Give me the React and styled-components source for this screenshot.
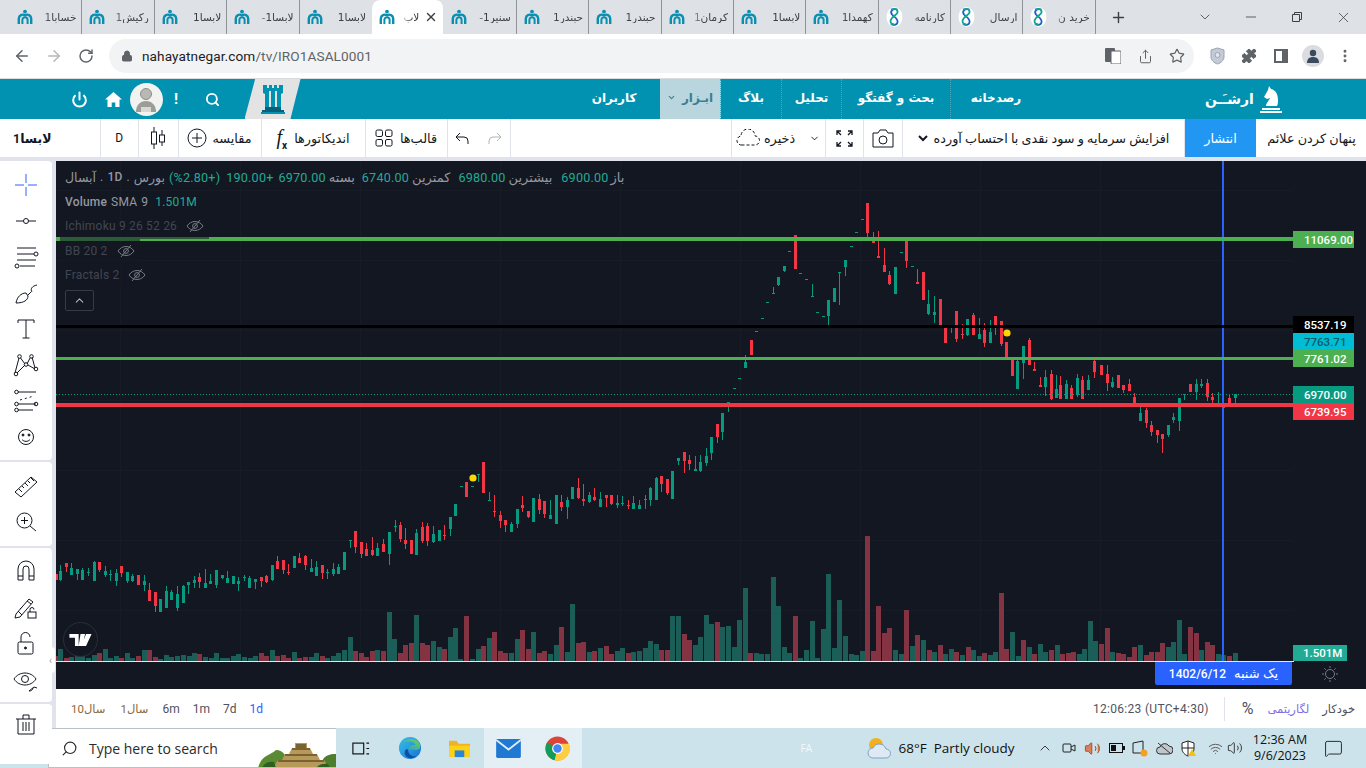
import React from 'react';
import styled, { createGlobalStyle } from 'styled-components';
import {
  ArrowLeft, ArrowRight, RotateCw, Lock, Plus, Minus, X, ChevronDown, ChevronUp, Star,
  Search, Power, Puzzle, MoreVertical, Share, Volume2, Wifi, MessageSquare,
} from 'lucide-react';

const UI = '"Roboto", "DejaVu Sans", sans-serif';
const GREEN = '#089981';
const RED = '#f23645';

const Global = createGlobalStyle`
  html, body { margin: 0; padding: 0; height: 100%; overflow: hidden; background: #e0e3eb; }
  #root { height: 100%; }
  * { box-sizing: border-box; }
`;

const Page = styled.div`
  width: 1366px;
  height: 768px;
  display: flex;
  flex-direction: column;
  overflow: hidden;
  font-family: ${UI};
  background: #e0e3eb;
`;

/* browser chrome */
const TabStrip = styled.div`
  height: 34px;
  flex: none;
  display: flex;
  align-items: stretch;
  padding-left: 10px;
  background: #dee1e6;
  color: #45494e;
`;

const Tab = styled.div`
  width: 72.4px;
  flex: none;
  display: flex;
  align-items: center;
  gap: 5px;
  padding: 0 5px 0 7px;
  background: ${(p) => (p.$active ? '#fff' : 'transparent')};
  border-radius: ${(p) => (p.$active ? '8px 8px 0 0' : '0')};
  border-right: 1px solid ${(p) => (p.$active || p.$beforeActive ? 'transparent' : '#8f9296')};
  background-clip: padding-box;
`;

const TabTitle = styled.span`
  flex: 1;
  min-width: 0;
  overflow: hidden;
  white-space: nowrap;
  direction: rtl;
  text-align: right;
  font: 10.5px "DejaVu Sans", sans-serif;
  color: #3c4043;
  -webkit-mask-image: linear-gradient(to right, transparent 0, #000 12px);
  mask-image: linear-gradient(to right, transparent 0, #000 12px);
`;

const StripButton = styled.div`
  width: ${(p) => p.$w}px;
  flex: none;
  display: flex;
  align-items: center;
  justify-content: center;
  color: #3c4043;
`;

const Grow = styled.div`
  flex: 1;
  min-width: 0;
`;

const AddressRow = styled.div`
  height: 45px;
  flex: none;
  display: flex;
  align-items: center;
  background: #fff;
  color: #5f6368;
  border-bottom: 1px solid #dadce0;
`;

const NavButton = styled.div`
  width: 32px;
  flex: none;
  display: flex;
  justify-content: center;
  color: ${(p) => (p.$off ? '#b6b8bb' : '#5f6368')};
  &:first-child { margin-left: 6px; }
`;

const Omnibox = styled.div`
  width: 1085px;
  height: 34px;
  margin-left: 7px;
  display: flex;
  align-items: center;
  padding: 0 1px 0 12px;
  border-radius: 17px;
  background: #f1f3f4;
`;

const Url = styled.span`
  margin-left: 9px;
  flex: 1;
  font: 13.6px "Roboto", sans-serif;
  letter-spacing: 0.1px;
  color: #5f6368;
  b { font-weight: 400; color: #202124; }
`;

const OmniIcon = styled.div`
  width: 32px;
  flex: none;
  display: flex;
  justify-content: center;
  color: #5f6368;
`;

const ToolbarIcon = styled.div`
  width: 32px;
  flex: none;
  display: flex;
  justify-content: center;
  color: #5f6368;
  margin-left: ${(p) => p.$ml ?? 0}px;
`;

const Avatar = styled.div`
  width: 22px;
  height: 22px;
  border-radius: 50%;
  background: #dadce0;
  display: flex;
  align-items: center;
  justify-content: center;
`;

/* site header */
const Header = styled.div`
  height: 40px;
  flex: none;
  display: flex;
  align-items: center;
  padding-left: 59px;
  background: #0092b0;
  color: #fff;
`;

const HeaderIcon = styled.div`
  width: ${(p) => p.$w}px;
  flex: none;
  display: flex;
  justify-content: center;
  align-items: center;
  font: 700 15px "Roboto", sans-serif;
`;

const UserFace = styled.div`
  width: 33px;
  height: 33px;
  margin-left: 2.5px;
  flex: none;
  border-radius: 50%;
  background: #f2f2f0;
  display: flex;
  align-items: center;
  justify-content: center;
`;

const LogoSlant = styled.div`
  width: 56px;
  height: 40px;
  flex: none;
  margin: 0 279.500px 0 10px;
  background: #e3e3e3;
  clip-path: polygon(19% 0, 100% 0, 82% 100%, 0 100%);
  display: flex;
  align-items: center;
  justify-content: center;
`;

const NavItem = styled.div`
  width: ${(p) => p.$w}px;
  height: 40px;
  flex: none;
  display: flex;
  align-items: center;
  justify-content: center;
  gap: 6px;
  padding-bottom: 3px;
  padding-right: ${(p) => p.$pr ?? 0}px;
  font: 700 12px "DejaVu Sans", sans-serif;
  background: ${(p) => (p.$active ? '#b9d6df' : 'transparent')};
  color: ${(p) => (p.$active ? '#3a7f94' : '#fff')};
  border-right: ${(p) => (p.$dots ? '1px dotted #4aa9bf' : '0')};
`;

const Brand = styled.div`
  display: flex;
  align-items: center;
  gap: 6px;
  margin-left: 164px;
  font: 700 14px "DejaVu Sans", sans-serif;
`;

/* chart toolbar */
const TopBar = styled.div`
  height: 38px;
  flex: none;
  display: flex;
  background: #fff;
  color: #131722;
`;

const Cell = styled.div`
  width: ${(p) => p.$w}px;
  flex: none;
  display: flex;
  align-items: center;
  justify-content: ${(p) => (p.$start ? 'flex-start' : 'center')};
  padding-left: ${(p) => (p.$start ? 13 : 0)}px;
  gap: ${(p) => p.$gap ?? 6}px;
  font: ${(p) => (p.$bold ? 700 : 400)} ${(p) => p.$size ?? 12.8}px ${UI};
  border-right: ${(p) => (p.$plain ? '0' : '1px solid #e0e3eb')};
  background: ${(p) => p.$bg ?? 'transparent'};
  color: ${(p) => p.$fg ?? '#131722'};
  white-space: nowrap;
`;

const SaveChevron = styled.span`
  display: flex;
  margin-left: 10px;
`;

const Fx = styled.span`
  font: italic 20px "Liberation Serif", serif;
  sub { font: 700 10px "Roboto", sans-serif; }
`;

const Body = styled.div`
  flex: 1;
  min-height: 0;
  display: flex;
  gap: 4px;
  padding-top: 4px;
`;

const SideRail = styled.div`
  width: 52px;
  flex: none;
  display: flex;
  flex-direction: column;
  gap: 2px;
  position: relative;
`;

const RailGroup = styled.div`
  flex: none;
  height: ${(p) => p.$h}px;
  padding-top: ${(p) => p.$pad}px;
  background: #fff;
  border-radius: 0 4px 4px 0;
  overflow: hidden;
`;

const RailButton = styled.div`
  height: ${(p) => p.$h ?? 36}px;
  display: flex;
  align-items: center;
  justify-content: center;
  color: #131722;
`;

const Handle = styled.div`
  position: absolute;
  left: 46px;
  top: 486px;
  width: 9px;
  height: 26px;
  border-radius: 4px;
  background: #fff;
  color: #9598a1;
  font: 10px "Roboto", sans-serif;
  display: flex;
  align-items: center;
  justify-content: center;
`;

const Main = styled.div`
  flex: 1;
  min-width: 0;
  display: flex;
  flex-direction: column;
`;

const ChartPanel = styled.div`
  height: 528px;
  flex: none;
  position: relative;
  overflow: hidden;
  background: #131722;
`;

const ChartSvg = styled.svg`
  display: block;
`;

const Legend = styled.div`
  position: absolute;
  left: 4px;
  top: 4px;
  display: flex;
  flex-direction: column;
  align-items: flex-start;
  color: #b2b5be;
  font: 12.5px ${UI};
`;

const LegendRow = styled.div`
  height: 24.5px;
  padding: 0 5px;
  display: flex;
  align-items: center;
  gap: ${(p) => p.$gap ?? 0}px;
  white-space: nowrap;
  color: ${(p) => (p.$dim ? '#434651' : '#9598a1')};
  background: ${(p) => (p.$dim ? 'rgba(19,23,34,0.55)' : 'transparent')};
`;

const Label = styled.span`
  font-size: ${(p) => p.$size ?? 12}px;
  font-weight: ${(p) => (p.$bold ? 500 : 400)};
  color: ${(p) => p.$c ?? 'inherit'};
  margin-left: ${(p) => p.$ml ?? 0}px;
  letter-spacing: 0.2px;
`;

const Collapse = styled.div`
  width: 29px;
  height: 21px;
  margin: 2px 0 0 5px;
  display: flex;
  align-items: center;
  justify-content: center;
  border: 1px solid #363a45;
  border-radius: 2px;
  color: #b2b5be;
`;

const PriceTag = styled.div`
  position: absolute;
  left: 1237px;
  top: ${(p) => p.$y}px;
  width: 61px;
  height: 17px;
  padding-left: 11px;
  display: flex;
  align-items: center;
  font: 500 11.5px "Roboto", sans-serif;
  background: ${(p) => p.$bg};
  color: ${(p) => p.$fg ?? '#fff'};
`;

const VolumeTag = styled(PriceTag)`
  height: 16px;
  width: 54px;
  padding-left: 10px;
  background: #22ab94;
`;

const DateTag = styled.div`
  position: absolute;
  left: 1099px;
  top: 501px;
  width: 137px;
  height: 23px;
  display: flex;
  align-items: center;
  justify-content: center;
  gap: 8px;
  border-radius: 0 0 2px 2px;
  background: #2962ff;
  color: #fff;
  font: 500 12px ${UI};
`;

const WatermarkBadge = styled.div`
  position: absolute;
  left: 7px;
  top: 461px;
  width: 35px;
  height: 35px;
  border-radius: 50%;
  border: 1px solid #2a2e39;
  background: #131722;
  display: flex;
  align-items: center;
  justify-content: center;
`;

const SunIcon = styled.div`
  position: absolute;
  left: 1266px;
  top: 505px;
  color: #787b86;
`;

const RangeBar = styled.div`
  height: 39px;
  flex: none;
  display: flex;
  align-items: center;
  padding: 0 11px 0 15px;
  background: #fff;
  font: 12px ${UI};
`;

const Range = styled.span`
  margin-right: ${(p) => p.$gap}px;
  font-size: ${(p) => p.$size ?? 12}px;
  letter-spacing: ${(p) => p.$track ?? 0}px;
  color: ${(p) => p.$c ?? '#50535e'};
  white-space: nowrap;
`;

const Divider = styled.i`
  width: 1px;
  height: 24px;
  margin: 0 17px 0 15px;
  background: #e0e3eb;
`;

/* windows taskbar */
const Taskbar = styled.div`
  height: 40px;
  flex: none;
  display: flex;
  align-items: center;
  background: #cde3ec;
  color: #111;
`;

const StartButton = styled.div`
  width: 48px;
  height: 40px;
  flex: none;
  display: flex;
  align-items: center;
  justify-content: center;
`;

const SearchBox = styled.div`
  width: 288px;
  height: 40px;
  flex: none;
  display: flex;
  align-items: center;
  padding-left: 12px;
  gap: 11px;
  background: #fff;
  border: 1px solid #b9c1c6;
  border-right: 0;
  font: 14px "Open Sans", sans-serif;
  color: #2b2b2b;
  overflow: hidden;
`;

const SearchGlyph = styled.span`
  display: flex;
  transform: scaleX(-1);
`;

const TaskApp = styled.div`
  width: 49.3px;
  height: 40px;
  flex: none;
  display: flex;
  align-items: center;
  justify-content: center;
  background: ${(p) => (p.$on ? '#e3eff4' : 'transparent')};
`;

const Lang = styled.span`
  margin-left: 218px;
  width: 66px;
  font: 10px "Open Sans", sans-serif;
  color: #f2f7f9;
`;

const Weather = styled.div`
  display: flex;
  align-items: center;
  gap: 6px;
  white-space: nowrap;
  font: 13.5px "Open Sans", sans-serif;
`;

const Tray = styled.div`
  width: ${(p) => p.$w ?? 23.8}px;
  margin-left: ${(p) => p.$ml ?? 0}px;
  flex: none;
  display: flex;
  align-items: center;
  justify-content: center;
  color: #222;
`;

const Clock = styled.div`
  width: 66px;
  margin-left: 2px;
  flex: none;
  text-align: center;
  font: 12.5px/16px "Open Sans", sans-serif;
`;

/* chart data, given as (x, up, bodyTop, bodyBottom, wickTop, wickBottom) in 3x crop coordinates */
const candlesFrom = (rows, ox, oy) => rows.map(([x, up, bt, bb, wt = bt, wb = bb]) => ({
  x: ox + x / 3, up, bt: oy + bt / 3, bb: oy + bb / 3, wt: oy + wt / 3, wb: oy + wb / 3,
}));

const CANDLES = [
  ...candlesFrom([
    [168,0,132,150],[181,1,123,150,105,153],[199,0,99,111,99,126],[214,1,114,135,99,135],[232,1,117,132,117,150],
    [247,1,120,150,114,150],[265,1,126,129,114,138],[283,1,96,153,93,153],[298,0,96,120,96,126],[316,1,123,135,108,141],
    [331,1,132,135,120,153],[349,1,129,153,117,168],[364,0,108,129,108,141],[382,1,126,153,126,159],[397,1,138,153,132,156],
    [415,0,135,165],[433,1,153,165,135,183],[448,0,180,213,159,213],[466,0,186,228,186,246],[481,1,207,246],
    [499,1,183,234,168,234],[514,1,186,210,180,210],[532,1,192,234,168,243],[550,1,168,219,165,219],[565,1,156,165,156,192],
    [583,1,150,159,138,174],[598,0,141,156,129,174],[616,1,159,174,117,174],[631,1,153,162,132,162],[649,1,120,165,120,174],
    [667,1,135,144,135,147],[682,1,144,159,123,159],[700,1,138,162],[715,1,153,162,141,183],[733,1,141,144,135,153],
    [748,1,144,174,138,174],[766,1,147,156,147,177],[784,0,141,153,141,171],[799,0,138,156,135,159],[817,1,105,150,105,153],
    [832,0,93,117,78,117],[850,0,90,120,90,132],[865,0,126,129,102,135],[883,1,78,114],[898,0,84,99,69,99],
    [916,0,78,105,75,120],[934,1,114,126,87,126],[949,1,111,138,93,138],[967,0,105,129,105,147],[982,1,126,129,117,147],
    [1000,1,117,132,99,138],[1015,1,111,132,102,132],[1033,1,66,120],[1051,1,30,33,30,54],[1066,0,3,51,3,69],
    [1084,0,36,72,36,84],[1099,0,57,78,39,78],[1117,0,60,75,21,78],[1132,1,54,78,39,78],[1150,0,42,66,27,66],
    [1168,1,6,72,6,105],[1186,1,-12,-9,-30,6],[1201,0,-15,27,-24,36],[1216,0,30,42,-6,57],[1234,0,30,72],
    [1249,1,9,75,-3,75],[1267,0,-9,33,-24,39],[1282,0,-12,33,-21,48],[1300,1,12,36,-12,39],[1318,1,0,33],
  ], 0, 530),
  ...candlesFrom([
    [13,0,405,408,375,420],[31,1,351,387,351,408],[46,1,312,348],[64,1,259,261],[79,0,246,291],[97,1,259,261],
    [115,1,223,226,223,246],[130,0,186,279],[148,1,300,303,276,303],[163,0,333,336,285,351],[181,0,345,363,333,384],
    [196,0,360,375,360,396],[214,1,372,396,366,396],[232,1,327,372,327,384],[247,0,315,324,288,336],[265,0,333,351,333,354],
    [280,1,294,366],[298,0,297,330,282,342],[313,0,303,342,303,354],[331,1,345,357,300,357],[349,1,285,372],
    [364,0,306,321,285,333],[382,1,300,321,291,357],[397,1,261,297],[415,0,264,294,234,297],[430,0,297,303,252,318],
    [448,1,285,306,276,309],[463,0,291,300,264,303],[481,1,297,321,276,321],[499,0,285,294,285,321],[514,0,285,312,285,315],
    [532,1,309,315,285,324],[547,1,309,312,288,318],[565,0,315,318,300,327],[580,1,309,327,288,327],[598,1,315,327,300,327],
    [616,1,297,300,285,327],[631,1,264,300,261,318],[649,1,234,300,231,300],[664,0,228,252,228,276],[682,0,237,279,237,285],
    [697,1,213,297],[715,1,174,183,174,195],[733,0,156,183,156,219],[748,0,180,192,165,210],[766,1,207,213,168,213],
    [781,1,186,213,165,216],[799,1,168,189,144,198],[814,1,111,159,111,180],[832,0,72,111,72,129],[847,1,39,96,39,120],
    [865,1,6,9,6,36],
  ], 440, 400),
  ...candlesFrom([
    [0,1,-36,-33],[16,1,-66,-63],[33,1,-114,-96,-135,-96],[50,0,-180,-135],[66,1,-207,-204],[84,1,-246,-243],
    [100,1,-294,-291],[116,1,-321,-318,-339,-318],[132,1,-369,-345,-369,-342],
  ], 734, 400),
  ...candlesFrom([
    [13,1,213,228,213,231],[28,1,168,171],[46,0,120,222],[61,1,235,237],[79,1,252,255],[97,1,303,306,267,306],
    [112,1,351,354],[130,1,363,366],[145,1,315,363,315,396],[163,1,279,321],[178,1,232,235,232,330],[196,1,195,216,195,243],
    [214,1,153,156],[229,1,111,114],[247,1,72,75],[262,0,24,114,24,126],[280,0,132,144,111,144],[295,0,183,189,108,189],
    [313,0,210,231,159,231],[328,0,240,267,228,270],[346,1,216,297],[364,1,171,174],[379,0,129,198,129,219],[397,1,213,216],
    [412,0,261,267,222,267],[430,0,231,315],[445,1,327,357,285,360],[463,1,351,360,303,384],[481,0,312,399],[496,0,396,444],
    [514,1,390,393,390,414],[529,0,348,432,348,441],[547,0,417,420,387,432],[562,1,372,420,372,423],[580,0,360,420,354,420],
    [598,1,417,432,369,432],[613,0,405,444,384,456],[631,1,411,444,375,444],[646,0,363,390,363,420],[664,0,378,447,378,453],
    [679,0,441,492],[697,0,489,543],[712,1,498,582,489,582],[730,1,453,504,453,552],[748,0,435,510,429,510],[763,0,522,528,501,528],
    [781,0,570,576,546,576],[796,1,546,576,525,603],[814,0,537,612,525,615],[829,1,582,609,540,609],
  ], 780, 195),
  ...candlesFrom([
    [-120,0,255,297,228,297],[-103,1,252,297,240,297],[-87,0,264,297,255,297],[-70,1,234,285,222,291],[-53,0,240,297,228,297],
    [-36,1,240,270,225,270],[-18,0,183,216,180,234],
  ], 1100, 300),
  ...candlesFrom([
    [3,0,195,225],[22,0,222,249,195,273],[37,1,246,261,231,264],[55,0,225,264],[70,0,255,270,255,279],[88,0,252,273,237,273],
    [103,0,291,318,279,318],[121,1,339,363,318,363],[139,0,330,369,324,384],[154,0,375,396,363,408],[172,0,390,405,390,429],
    [187,0,402,417,402,459],[205,1,375,405,375,411],[220,1,351,360,339,369],[238,1,294,363,294,393],[253,1,282,285,282,300],
    [271,0,252,276],[289,1,252,276,237,300],[304,1,252,258,237,264],[322,0,249,291,237,303],[337,0,291,300,279,315],
    [355,1,312,315,276,318],[370,1,318,324,318,328],[388,0,294,312,285,318],[406,1,282,294,282,315],
  ], 1100, 300),
];

const barsFrom = (rows, ox, oy) => rows.map(([x, up, top]) => ({ x: ox + x / 3, up, top: oy + top / 3 }));

const VOLUMES = [
  ...barsFrom([
    [168,0,378],[181,1,357],[198,0,384],[214,1,381],[231,1,375],[247,1,375],[264,1,384],[281,1,375],[298,0,369],[315,1,357],
    [331,1,384],[348,1,378],[364,0,384],[381,1,369],[397,1,384],[414,0,378],[432,1,360],[448,0,360],[465,0,381],[481,1,387],
    [497,1,375],[514,1,381],[531,1,378],[549,1,375],[566,1,378],[582,1,369],[598,0,372],[615,1,381],[632,1,384],[649,1,369],
    [665,1,384],[682,1,384],[699,1,378],[715,1,372],[732,1,381],[749,1,384],[765,1,378],[783,0,369],[799,0,378],[816,1,360],
    [832,0,378],[849,0,375],[865,0,384],[882,1,366],[898,0,384],[915,0,381],[932,1,381],[949,1,369],[965,0,378],[982,1,384],
    [999,1,378],[1015,1,369],[1033,1,360],[1050,1,321],[1066,0,363],[1082,0,369],[1099,0,381],[1116,0,363],[1132,1,360],[1149,0,363],
    [1166,1,246],[1183,1,327],[1199,0,369],[1216,0,345],[1232,0,339],[1249,1,255],[1266,0,339],[1282,0,345],[1299,1,333],[1316,1,351],
    [1332,0,357],[1349,1,321],[1366,1,294],
  ], 0, 530),
  ...barsFrom([
    [0,1,387],[19,0,258],[37,1,387],[54,1,357],[70,0,348],[87,1,324],[103,0,306],[120,0,363],[136,0,369],[154,1,369],[171,1,327],
    [187,0,300],[204,0,357],[220,1,306],[237,0,369],[253,0,363],[271,1,372],[288,1,345],[304,0,291],[321,1,366],[337,1,222],
    [354,0,339],[370,0,336],[387,1,366],[403,0,363],[421,1,354],[438,0,348],[454,0,372],[471,1,363],[487,1,354],[504,0,369],
    [520,1,366],[538,1,363],[555,1,354],[571,1,333],[588,1,342],[604,0,360],[621,0,360],[637,1,258],[655,1,258],[672,0,312],
    [688,0,330],[705,1,345],[721,1,321],[738,1,255],[754,1,282],[771,0,276],[787,1,291],[805,1,288],[821,1,351],[838,1,270],
    [855,1,174],[871,0,369],[888,1,369],[904,1,372],[922,1,372],[939,1,141],[955,1,228],[972,1,351],[988,1,369],[1005,0,258],
    [1021,1,384],[1039,1,360],[1056,1,273],[1072,1,384],[1089,1,297],[1105,1,132],[1122,1,354],[1138,1,210],[1156,1,318],[1173,1,372],
    [1189,1,375],[1206,1,363],[1222,0,18],[1239,0,363],[1255,0,228],[1272,0,309],[1288,0,294],[1306,1,360],[1323,1,372],[1339,0,240],
    [1356,1,348],[1372,0,315],
    [1389,1,330],[1406,0,360],[1423,1,366],[1439,0,345],[1456,1,372],[1473,1,357],[1489,0,366],[1506,1,375],[1523,0,351],[1539,1,360],
    [1556,1,378],[1573,0,369],[1589,1,375],[1606,1,366],[1623,0,189],[1639,0,357],[1656,1,306],[1673,1,378],[1689,0,330],[1706,1,351],
    [1723,0,372],[1739,1,342],[1756,1,366],
  ], 460, 530),
  ...barsFrom([
    [3,0,90],[20,1,75],[37,0,102],[54,0,99],[70,0,96],[87,1,102],[103,1,87],[120,1,3],[136,1,63],[153,0,72],[170,0,24],[187,1,96],
    [204,0,99],[220,0,102],[237,0,111],[253,0,81],[270,1,75],[287,0,105],[303,0,96],[320,0,96],[337,0,69],[353,1,81],[370,1,66],
    [387,1,0],[403,1,102],[420,0,21],[437,0,39],[453,1,90],[470,0,66],[487,0,75],[503,1,102],[520,1,105],[537,0,108],[555,1,99],
  ], 1050, 620),
];

const LEVELS = [
  { y: 237, h: 4, c: '#4caf50' },
  { y: 325, h: 3, c: '#000' },
  { y: 357, h: 3, c: '#4caf50' },
  { y: 403, h: 4, c: RED },
];

const TAGS = [
  { y: 70, t: '11069.00', bg: '#4caf50' },
  { y: 155, t: '8537.19', bg: '#000' },
  { y: 172, t: '7763.71', bg: '#00bcd4', fg: '#0c5a66' },
  { y: 189, t: '7761.02', bg: '#4caf50' },
  { y: 225, t: '6970.00', bg: GREEN },
  { y: 242, t: '6739.95', bg: RED },
];

const TABS = [
  ['خسابا1', 'n'], ['رکیش1', 'n'], ['لابسا1', 'n'], ['لابسا1-', 'n'], ['لابسا1', 'n'], ['لاب', 'n', true],
  ['سنیر1-', 'n'], ['حبندر1', 'n'], ['حبندر1', 'n'], ['کرمان1', 'n'], ['لابسا1', 'n'], ['کهمدا1', 'n'],
  ['کارنامه', 'b'], ['ارسال', 'b'], ['خرید ن', 'b'],
];

// legend values after the symbol, each with the space before it
const OHLC = [
  ['(%2.80+)', 1, 4], ['190.00+', 1, 6], ['6970.00', 1, 5], ['بسته', 0, 3], ['6740.00', 1, 7], ['کمترین', 0, 3],
  ['6980.00', 1, 8], ['بیشترین', 0, 3], ['6900.00', 1, 9], ['باز', 0, 2],
];

/* favicons and logos */
const NahayatIcon = () => (
  <svg width="16" height="16" viewBox="0 0 16 16" fill="none" stroke="#0a8fb1" strokeWidth="2.4">
    <circle cx="8" cy="2.6" r="1.9" fill="#0a8fb1" stroke="none" />
    <path d="M1.800 15V9.500a4 4 0 0 1 6.200-3.200 4 4 0 0 1 6.200 3.200V15" />
    <path d="M5.400 15v-4.200a2.600 2.600 0 0 1 5.200 0V15" strokeWidth="2" />
  </svg>
);

const RibbonIcon = () => (
  <svg width="17" height="20" viewBox="0 0 17 20" fill="none" strokeWidth="1.800">
    <ellipse cx="8.500" cy="10" rx="8" ry="10" fill="#fff" stroke="none" />
    <path d="M11.500 2.500C7 1 3.500 4 6 7.500c2 2.500 6.500 4 5.500 8-.6 2.500-4 3.200-6.500 1.500" stroke="#1d62c4" />
    <path d="M5 2.500c3-1.300 7-.5 6.500 3-.4 2.500-6.500 4-7 8.500-.2 2 1.800 3.500 4 3.500" stroke="#16a394" />
  </svg>
);

const Rook = () => (
  <svg width="26" height="32" viewBox="0 0 26 32">
    <path d="M3 2h4v3h2V2h3v3h2V2h3v3h2V2h4v8l-2 1v13H5V11L3 10z" fill="#0092b0" />
    <path d="M9 8h2v16H9zM15 8h2v16h-2z" fill="#e3e3e3" />
    <path d="M5 24h16v3H5zM2 27h22v4H2z" fill="#06607a" />
    <path d="M1 29h24v2H1z" fill="#0092b0" />
  </svg>
);

const Knight = () => (
  <svg width="22" height="28" viewBox="0 0 22 28" fill="#fff">
    <path d="M9 1l2 3c5 1 7 6 7 11 0 2 0 4-1 6H6c0-3 3-5 4-8l-3 1-3-2 4-7z" />
    <path d="M2 23h18v2H2zM0 26h22v2H0z" />
  </svg>
);

const Face = () => (
  <svg width="26" height="28" viewBox="0 0 26 28">
    <circle cx="13" cy="9" r="5.500" fill="#b9b9b4" stroke="#8e8e88" />
    <path d="M3 27c0-7 4-11 10-11s10 4 10 11z" fill="#9d9d97" />
    <path d="M8 22h10v5H8z" fill="#d8d8d4" />
  </svg>
);

/* 28px chart tool icons */
const Tool = ({ children, color = 'currentColor' }) => (
  <svg width="28" height="28" viewBox="0 0 28 28" fill="none" stroke={color}>{children}</svg>
);

const RAIL_GROUPS = [
  {
    h: 299, pad: 6, rowH: 36,
    icons: [
      <Tool color="#2962ff"><path d="M14 3v9M14 16v9M3 14h9M16 14h9" /></Tool>,
      <Tool><path d="M4 14h7.500M16.500 14H24" /><circle cx="14" cy="14" r="2.500" /></Tool>,
      <Tool><path d="M5 5h19M5 11h17M5 17h19M8 23h15" /><circle cx="24" cy="11" r="2" /><circle cx="5" cy="23" r="2" /></Tool>,
      <Tool><path d="M4 24c1-6 5-10 10-10l2 3c0 4-4 7-12 7zM16 16l3-3M20 13c-2-3 0-6 5-7" /></Tool>,
      <Tool><path d="M6 8V5h16v3M14 5v18M10.500 23h7" /></Tool>,
      <Tool><path d="M7 7l-4 15M8.500 7L13 13M15 13l3-6M20 6l3 11M5 22l8-8M16 14l7 4" /><circle cx="7.500" cy="5.500" r="1.800" /><circle cx="14" cy="13.500" r="1.800" /><circle cx="19.500" cy="5.500" r="1.800" /><circle cx="4" cy="23" r="1.800" /><circle cx="24" cy="18" r="1.800" /></Tool>,
      <Tool><path d="M6 5h18M6 17h18M6 23h15" /><path d="M8 13l14-4" strokeDasharray="2 3" /><circle cx="4.500" cy="5" r="1.800" /><circle cx="4.500" cy="17" r="1.800" /><circle cx="24" cy="17" r="1.800" /><circle cx="4.500" cy="23" r="1.800" /></Tool>,
      <Tool><circle cx="14" cy="14" r="7.500" /><circle cx="11" cy="12" r="1" fill="currentColor" /><circle cx="17" cy="12" r="1" fill="currentColor" /><path d="M10 16.500c2 2.500 6 2.500 8 0" /></Tool>,
    ],
  },
  {
    h: 84, pad: 7, rowH: 35,
    icons: [
      <Tool><path d="M3 19L19 4l6 5L9 24zM7 16l3 3M10 13l2 2M13 10l3 3M16 8l2 2M19 5l3 3" /></Tool>,
      <Tool><circle cx="12.500" cy="12.500" r="7.500" /><path d="M18 18l6 5M12.500 9v7M9 12.500h7" /></Tool>,
    ],
  },
  {
    h: 154, pad: 5, rowH: 36.5,
    icons: [
      <Tool><path d="M6 23V12a8 8 0 0 1 16 0v11h-5V12a3 3 0 0 0-6 0v11zM6 19h5M17 19h5" /></Tool>,
      <Tool><path d="M4 20L17 5l4 3L8 23l-5 1zM6 17l4 4M15 7l4 3M11 12l-3 3" /><rect x="16" y="18" width="8" height="6" /><path d="M18 18v-2.500a2 2 0 0 1 4 0" /></Tool>,
      <Tool><rect x="6" y="12" width="15" height="12" rx="1.500" /><path d="M9 12V7a4.500 4.500 0 0 1 9 0" /><circle cx="13.500" cy="18" r="1" fill="currentColor" /></Tool>,
      <Tool><path d="M2 12c5-8 17-8 22 0-5 8-17 8-22 0z" /><circle cx="13" cy="12" r="3.500" /><path d="M17 24l5-4 3 1M17 24c2 0 4-1 4-3" /></Tool>,
    ],
  },
  {
    h: 60, pad: 2, rowH: 36,
    icons: [
      <Tool><path d="M4 9h20M11 9V5h6v4M6 9v15h16V9M11 12v9M14 12v9M17 12v9" /></Tool>,
    ],
  },
];

const ChartCanvas = () => (
  <ChartSvg width="1310" height="528" viewBox="56 161 1310 528" shapeRendering="crispEdges">
    {[120, 240, 360, 500, 620, 740, 860, 980, 1100].map((x) => (
      <line key={x} x1={x} x2={x} y1="161" y2="661" stroke="#171b26" />
    ))}
    {[190, 260, 330, 400, 470, 540, 610].map((y) => (
      <line key={y} x1="56" x2="1293" y1={y} y2={y} stroke="#171b26" />
    ))}
    {VOLUMES.map((b, i) => (
      <rect key={i} x={Math.round(b.x - 2)} y={b.top} width="4.600" height={661 - b.top} fill={b.up ? '#1b5e58' : '#843342'} />
    ))}
    <rect x="1222" y="161" width="2" height="500" fill="#2962ff" />
    {CANDLES.map((c, i) => {
      const cx = Math.round(c.x);
      return (
        <g key={i} fill={c.up ? GREEN : RED}>
          <rect x={cx} y={Math.round(c.wt)} width="1" height={Math.max(1, Math.round(c.wb - c.wt))} />
          <rect x={cx - 1} y={Math.round(c.bt)} width="3" height={Math.max(1, Math.round(c.bb - c.bt))} />
        </g>
      );
    })}
    <line x1="56" x2="1293" y1="394.500" y2="394.500" stroke={GREEN} strokeDasharray="1 2" />
    {LEVELS.map((l) => <rect key={l.y} x="56" y={l.y} width="1238" height={l.h} fill={l.c} />)}
    <rect x="56" y="661" width="1238" height="1" fill="#e6e7ea" />
    <g shapeRendering="auto" fill="#ffd600">
      <circle cx="473" cy="478" r="3.600" />
      <circle cx="1007" cy="333" r="3.600" />
    </g>
  </ChartSvg>
);

const EyeOff = () => (
  <svg width="18" height="14" viewBox="0 0 18 14" fill="none" stroke="#787b86">
    <path d="M1 7c4-6 12-6 16 0-4 6-12 6-16 0z" />
    <circle cx="9" cy="7" r="2.400" />
    <path d="M14 1L4 13" />
  </svg>
);

const EdgeIcon = () => (
  <svg width="24" height="24" viewBox="0 0 26 26">
    <defs>
      <linearGradient id="edgeA" x1="0" y1="0" x2="1" y2="1"><stop offset="0" stopColor="#35c1f1" /><stop offset="1" stopColor="#1b6fd0" /></linearGradient>
      <linearGradient id="edgeB" x1="0" y1="1" x2="1" y2="0"><stop offset="0" stopColor="#1e9ae0" /><stop offset="1" stopColor="#70d44b" /></linearGradient>
    </defs>
    <circle cx="13" cy="13" r="12" fill="url(#edgeA)" />
    <path d="M2 14C3 7 8 3 14 3c6 0 10 4 10 8 0 3-2 4-5 4H11c0-4 5-6 8-5-1-3-4-4-7-4C7 6 3 9 2 14z" fill="url(#edgeB)" />
    <path d="M11 15c0 5 4 8 9 7-3 2-7 3-10 1-3-2-4-6-1-9z" fill="#0c4fa8" />
  </svg>
);

const FolderIcon = () => (
  <svg width="23" height="21" viewBox="0 0 24 22">
    <path d="M1 3h8l2 3h12v14H1z" fill="#f0b323" />
    <path d="M1 8h22v12H1z" fill="#fcd116" />
    <path d="M7 13h10v7H7z" fill="#2a86d6" />
  </svg>
);

const MailIcon = () => (
  <svg width="25" height="19" viewBox="0 0 26 20">
    <rect width="26" height="20" rx="1.500" fill="#1f78d1" />
    <path d="M0 1l13 10L26 1" fill="none" stroke="#dcecf9" strokeWidth="2" />
  </svg>
);

const ChromeIcon = () => (
  <svg width="25" height="25" viewBox="0 0 26 26">
    <circle cx="13" cy="13" r="12.500" fill="#db4437" />
    <path d="M13 13L2.200 6.800A12.500 12.500 0 0 0 10 25.200z" fill="#0f9d58" />
    <path d="M13 13l-3 12.200A12.500 12.500 0 0 0 24.800 8H13z" fill="#ffcd40" />
    <circle cx="13" cy="13" r="5.600" fill="#fff" />
    <circle cx="13" cy="13" r="4.400" fill="#4285f4" />
  </svg>
);

const TempleThumb = () => (
  <svg width="78" height="40" viewBox="0 0 78 40" style={{ flex: 'none', marginLeft: 'auto' }}>
    <path d="M0 40c4-14 12-12 18-18 8 0 12 8 14 18z" fill="#5a8a33" />
    <path d="M62 40c2-12 8-14 16-14v14z" fill="#4e7d2c" />
    <path d="M15 40l5-8h4l3-6h4l3-6h3v-5h12v5h3l3 6h4l3 6h4l5 8z" fill="#b79a5a" />
    <path d="M34 20h18v2H34zM27 26h32v2H27zM20 32h46v2H20zM38 16h10v4H38z" fill="#7a6233" />
    <path d="M4 40c2-5 7-7 12-6l2 6zM58 40c3-4 8-5 12-4l2 4z" fill="#2f5f22" />
  </svg>
);

const Cloudy = () => (
  <svg width="26" height="24" viewBox="0 0 26 24">
    <circle cx="10" cy="9" r="7" fill="#f2b01e" />
    <path d="M7 22a5 5 0 0 1 0-10 7 7 0 0 1 13 1 4.500 4.500 0 0 1 0 9z" fill="#dfe9f3" stroke="#7ea2c8" />
  </svg>
);

const App = () => {
  const activeIndex = TABS.findIndex((t) => t[2]);
  return (
    <Page>
      <Global />
      <TabStrip>
        {TABS.map(([title, kind, active], i) => (
          <Tab key={i} $active={active} $beforeActive={i === activeIndex - 1}>
            {kind === 'n' ? <NahayatIcon /> : <RibbonIcon />}
            <TabTitle>{title}</TabTitle>
            {active && <X size={14} color="#3c4043" strokeWidth={2.4} />}
          </Tab>
        ))}
        <StripButton $w={46}><Plus size={17} strokeWidth={2} /></StripButton>
        <Grow />
        <StripButton $w={46}><ChevronDown size={16} strokeWidth={1.2} /></StripButton>
        <StripButton $w={46}><Minus size={16} strokeWidth={1.2} /></StripButton>
        <StripButton $w={46}>
          <svg width="12" height="12" viewBox="0 0 12 12" fill="none" stroke="#3c4043"><path d="M1.500 3.500h7v7h-7zM3.500 3.500v-2h7v7h-2" /></svg>
        </StripButton>
        <StripButton $w={46}><X size={17} strokeWidth={1.1} /></StripButton>
      </TabStrip>

      <AddressRow>
        <NavButton><ArrowLeft size={18} strokeWidth={2} /></NavButton>
        <NavButton $off><ArrowRight size={18} strokeWidth={2} /></NavButton>
        <NavButton><RotateCw size={16} strokeWidth={2.2} /></NavButton>
        <Omnibox>
          <Lock size={12} fill="#5f6368" strokeWidth={2} />
          <Url><b>nahayatnegar.com</b>/tv/IRO1ASAL0001</Url>
          <OmniIcon>
            <svg width="16" height="16" viewBox="0 0 16 16"><rect x="0" y="0" width="10" height="14" rx="1" fill="#5f6368" /><rect x="6" y="3" width="10" height="13" rx="1" fill="#fff" stroke="#5f6368" /></svg>
          </OmniIcon>
          <OmniIcon><Share size={15} strokeWidth={1.6} /></OmniIcon>
          <OmniIcon><Star size={16} strokeWidth={1.8} /></OmniIcon>
        </Omnibox>
        <ToolbarIcon $ml={7}>
          <svg width="15" height="18" viewBox="0 0 15 18" fill="#c4cad6" stroke="#9aa3b2"><path d="M7.500 1l6.500 2v7c0 3-3 6-6.500 7C4 16 1 13 1 10V3z" /><circle cx="7.500" cy="8" r="2.500" fill="#e4e7ec" /></svg>
        </ToolbarIcon>
        <ToolbarIcon><Puzzle size={16} fill="#5f6368" strokeWidth={1.5} /></ToolbarIcon>
        <ToolbarIcon>
          <svg width="14" height="14" viewBox="0 0 14 14" fill="none" stroke="#5f6368" strokeWidth="2"><path d="M1 1h12v12H1z" /><path d="M10 1v12" strokeWidth="4" /></svg>
        </ToolbarIcon>
        <ToolbarIcon>
          <Avatar>
            <svg width="14" height="14" viewBox="0 0 14 14" fill="#3c4a5e"><circle cx="7" cy="4" r="3.200" /><path d="M1 14c0-4 2-6 6-6s6 2 6 6z" /></svg>
          </Avatar>
        </ToolbarIcon>
        <ToolbarIcon><MoreVertical size={16} strokeWidth={2.4} /></ToolbarIcon>
      </AddressRow>

      <Header>
        <HeaderIcon $w={40}><Power size={17} strokeWidth={2.8} /></HeaderIcon>
        <HeaderIcon $w={28}>
          <svg width="17" height="15" viewBox="0 0 17 15" fill="#fff"><path d="M8.500 0L0 7.500h2.500V15h4.200v-4.500h3.600V15h4.200V7.500H17z" /></svg>
        </HeaderIcon>
        <UserFace><Face /></UserFace>
        <HeaderIcon $w={27}>!</HeaderIcon>
        <HeaderIcon $w={45}><Search size={15} strokeWidth={3} /></HeaderIcon>
        <LogoSlant><Rook /></LogoSlant>
        <NavItem $w={80} $pr={12}>کاربران</NavItem>
        <NavItem $w={61} $active $dots>
          <ChevronDown size={9} strokeWidth={3} />ابـزار
        </NavItem>
        <NavItem $w={61} $dots>بلاگ</NavItem>
        <NavItem $w={60} $dots>تحلیل</NavItem>
        <NavItem $w={109} $dots>بحث و گفتگو</NavItem>
        <NavItem $w={90}>رصدخانه</NavItem>
        <Brand>ارشـَـن <Knight /></Brand>
      </Header>

      <TopBar>
        <Cell $w={101} $bold $size={12.5} $start>لابسا1</Cell>
        <Cell $w={37.5} $size={12}>D</Cell>
        <Cell $w={40}>
          <svg width="18" height="22" viewBox="0 0 18 22" fill="none" stroke="#131722"><path d="M5 0v5M5 17v5M13 3v5M13 15v4" /><rect x="2.500" y="5" width="5" height="12" /><rect x="10.500" y="8" width="5" height="7" /></svg>
        </Cell>
        <Cell $w={83} $gap={5}>
          <svg width="20" height="20" viewBox="0 0 20 20" fill="none" stroke="#131722"><circle cx="10" cy="10" r="9" /><path d="M10 5v10M5 10h10" /></svg>
          مقایسه
        </Cell>
        <Cell $w={104} $gap={7}><Fx>f<sub>x</sub></Fx>اندیکاتورها</Cell>
        <Cell $w={82} $gap={7}>
          <svg width="18" height="18" viewBox="0 0 18 18" fill="none" stroke="#131722"><rect x="1" y="1" width="6.500" height="6.500" rx="1.500" /><rect x="10.500" y="1" width="6.500" height="6.500" rx="1.500" /><rect x="1" y="10.500" width="6.500" height="6.500" rx="1.500" /><rect x="10.500" y="10.500" width="6.500" height="6.500" rx="1.500" /></svg>
          قالب‌ها
        </Cell>
        <Cell $w={63} $gap={17}>
          <svg width="15" height="13" viewBox="0 0 15 13" fill="none" stroke="#131722"><path d="M5 1L1 5l4 4M1 5h8a4 4 0 0 1 4 4v3" /></svg>
          <svg width="15" height="13" viewBox="0 0 15 13" fill="none" stroke="#b2b5be"><path d="M10 1l4 4-4 4M14 5H6a4 4 0 0 0-4 4v3" /></svg>
        </Cell>
        <Cell $w={221} />
        <Cell $w={94} $gap={4}>
          <svg width="24" height="18" viewBox="0 0 24 18" fill="none" stroke="#131722" strokeDasharray="3 2"><path d="M6 16a4.500 4.500 0 0 1-1-9 7 7 0 0 1 14 0 4.500 4.500 0 0 1 0 9z" /></svg>
          ذخیره
          <SaveChevron><ChevronDown size={11} /></SaveChevron>
        </Cell>
        <Cell $w={38}>
          <svg width="17" height="17" viewBox="0 0 17 17" fill="none" stroke="#131722" strokeWidth="1.300"><path d="M1 5V1h4M12 1h4v4M1 12v4h4M12 16h4v-4M1 1l4 4M16 1l-4 4M1 16l4-4M16 16l-4-4" /></svg>
        </Cell>
        <Cell $w={39.500}>
          <svg width="22" height="19" viewBox="0 0 22 19" fill="none" stroke="#131722"><path d="M1 4h5l2-3h6l2 3h5v14H1z" /><circle cx="11" cy="11" r="4" /></svg>
        </Cell>
        <Cell $w={282} $gap={6}>
          <svg width="10" height="7" viewBox="0 0 10 7"><path d="M1 1l4 4 4-4" fill="none" stroke="#131722" strokeWidth="2" /></svg>
          افزایش سرمایه و سود نقدی با احتساب آورده
        </Cell>
        <Cell $w={71} $plain $bg="#2196f3" $fg="#fff">انتشار</Cell>
        <Cell $w={111} $plain>پنهان کردن علائم</Cell>
      </TopBar>

      <Body>
        <SideRail>
          {RAIL_GROUPS.map((g, i) => (
            <RailGroup key={i} $h={g.h} $pad={g.pad}>
              {g.icons.map((icon, j) => <RailButton key={j} $h={g.rowH}>{icon}</RailButton>)}
            </RailGroup>
          ))}
          <Handle>‹</Handle>
        </SideRail>
        <Main>
          <ChartPanel>
            <ChartCanvas />
            <Legend>
              <LegendRow>
                <Label $size={12.5}>آبسال</Label>
                <Label $ml={4}>.</Label>
                <Label $bold $ml={4}>1D</Label>
                <Label $ml={4}>.</Label>
                <Label $size={12.5} $ml={4}>بورس</Label>
                {OHLC.map(([t, isValue, ml]) => (
                  <Label key={t} $size={isValue ? 12.6 : 13} $c={isValue ? '#22ab94' : undefined} $ml={ml}>{t}</Label>
                ))}
              </LegendRow>
              <LegendRow $gap={4}>
                <Label $bold>Volume</Label>
                <Label>SMA</Label>
                <Label>9</Label>
                <Label $c="#22ab94" $ml={3}>1.501M</Label>
              </LegendRow>
              <LegendRow $dim $gap={9}><Label>Ichimoku 9 26 52 26</Label><EyeOff /></LegendRow>
              <LegendRow $dim $gap={9}><Label>BB 20 2</Label><EyeOff /></LegendRow>
              <LegendRow $dim $gap={9}><Label>Fractals 2</Label><EyeOff /></LegendRow>
              <Collapse><ChevronUp size={13} strokeWidth={2} /></Collapse>
            </Legend>
            {TAGS.map((t) => <PriceTag key={t.t} $y={t.y} $bg={t.bg} $fg={t.fg}>{t.t}</PriceTag>)}
            <VolumeTag $y={484}>1.501M</VolumeTag>
            <DateTag><span>1402/6/12</span><Label $size={13}>یک شنبه</Label></DateTag>
            <WatermarkBadge>
              <svg width="23" height="12" viewBox="0 0 24 13" fill="#fff"><path d="M0 0h10v13H6V4H0zM12 0h5l-3 13h-4zM18 0h6l-6 13h-5z" /></svg>
            </WatermarkBadge>
            <SunIcon>
              <svg width="16" height="16" viewBox="0 0 16 16" fill="none" stroke="currentColor"><circle cx="8" cy="8" r="4.500" /><path d="M8 0v2M8 14v2M0 8h2M14 8h2M2.300 2.300l1.500 1.500M12.200 12.200l1.500 1.500M2.300 13.700l1.500-1.500M12.200 3.800l1.500-1.500" /></svg>
            </SunIcon>
          </ChartPanel>
          <RangeBar>
            <Range $gap={15} $size={11.5} $c="#8a6a3a">10سال</Range>
            <Range $gap={14} $size={11.5} $c="#8a6a3a">1سال</Range>
            <Range $gap={13}>6m</Range>
            <Range $gap={13}>1m</Range>
            <Range $gap={13}>7d</Range>
            <Range $gap={0} $c="#2962ff">1d</Range>
            <Grow />
            <Range $gap={0} $track={0.3}>12:06:23 (UTC+4:30)</Range>
            <Divider />
            <Range $gap={14} $size={16}>%</Range>
            <Range $gap={13} $size={11.5} $c="#7d6fe8">لگاریتمی</Range>
            <Range $gap={0} $size={11.5}>خودکار</Range>
          </RangeBar>
        </Main>
      </Body>

      <Taskbar>
        <StartButton>
          <svg width="16" height="16" viewBox="0 0 16 16" fill="#111"><path d="M0 2.200l6.500-.9v6.200H0zM7.500 1.200L16 0v7.500H7.500zM0 8.500h6.500v6.200L0 13.800zM7.500 8.500H16V16l-8.500-1.200z" /></svg>
        </StartButton>
        <SearchBox>
          <SearchGlyph><Search size={17} strokeWidth={1.6} /></SearchGlyph>
          Type here to search
          <TempleThumb />
        </SearchBox>
        <TaskApp>
          <svg width="18" height="17" viewBox="0 0 20 18" fill="none" stroke="#111" strokeWidth="1.300"><rect x="1" y="3" width="12" height="12" /><path d="M16 3h3M16 9h3M16 15h3" /></svg>
        </TaskApp>
        <TaskApp><EdgeIcon /></TaskApp>
        <TaskApp><FolderIcon /></TaskApp>
        <TaskApp $on><MailIcon /></TaskApp>
        <TaskApp $on><ChromeIcon /></TaskApp>
        <Lang>FA</Lang>
        <Weather><Cloudy />68°F&nbsp; Partly cloudy</Weather>
        <Grow />
        <Tray><ChevronUp size={16} strokeWidth={1.3} /></Tray>
        <Tray>
          <svg width="16" height="16" viewBox="0 0 16 16" fill="none" stroke="#222"><rect x="2" y="4" width="8" height="8" rx="1" /><path d="M10 7l4-2v6l-4-2" /></svg>
        </Tray>
        <Tray><Volume2 size={17} fill="#d9805a" color="#a2512f" strokeWidth={1.4} /></Tray>
        <Tray>
          <svg width="16" height="10" viewBox="0 0 16 10"><rect x=".5" y=".5" width="13" height="9" fill="none" stroke="#111" /><rect x="2" y="2" width="5" height="6" fill="#111" /><rect x="14" y="3" width="2" height="4" fill="#111" /></svg>
        </Tray>
        <Tray>
          <svg width="17" height="17" viewBox="0 0 17 17"><path d="M1 3l10-2v12H1z" fill="none" stroke="#222" /><circle cx="12" cy="13" r="3.500" fill="#f4a020" /></svg>
        </Tray>
        <Tray>
          <svg width="17" height="13" viewBox="0 0 17 13"><path d="M4 12a3.500 3.500 0 0 1 0-7 5 5 0 0 1 9-1 3.500 3.500 0 0 1 0 8z" fill="#bfc6cc" stroke="#333" /><path d="M2 1l13 11" stroke="#333" /></svg>
        </Tray>
        <Tray>
          <svg width="16" height="17" viewBox="0 0 16 17"><path d="M8 1l6 2v6c0 3-3 6-6 7-3-1-6-4-6-7V3z" fill="#fff" stroke="#222" /><path d="M8 1v15M2 8h12" stroke="#222" /><path d="M12 9l4 7H8z" fill="#f4c20d" /></svg>
        </Tray>
        <Tray $w={20} $ml={5}><Wifi size={15} color="#555" strokeWidth={1.5} /></Tray>
        <Tray $w={20}><Volume2 size={16} strokeWidth={1.3} /></Tray>
        <Clock>12:36 AM<br />9/6/2023</Clock>
        <Tray $w={34} $ml={3}><MessageSquare size={19} strokeWidth={1.2} /></Tray>
        <Tray $w={16} />
      </Taskbar>
    </Page>
  );
};

export default App;
